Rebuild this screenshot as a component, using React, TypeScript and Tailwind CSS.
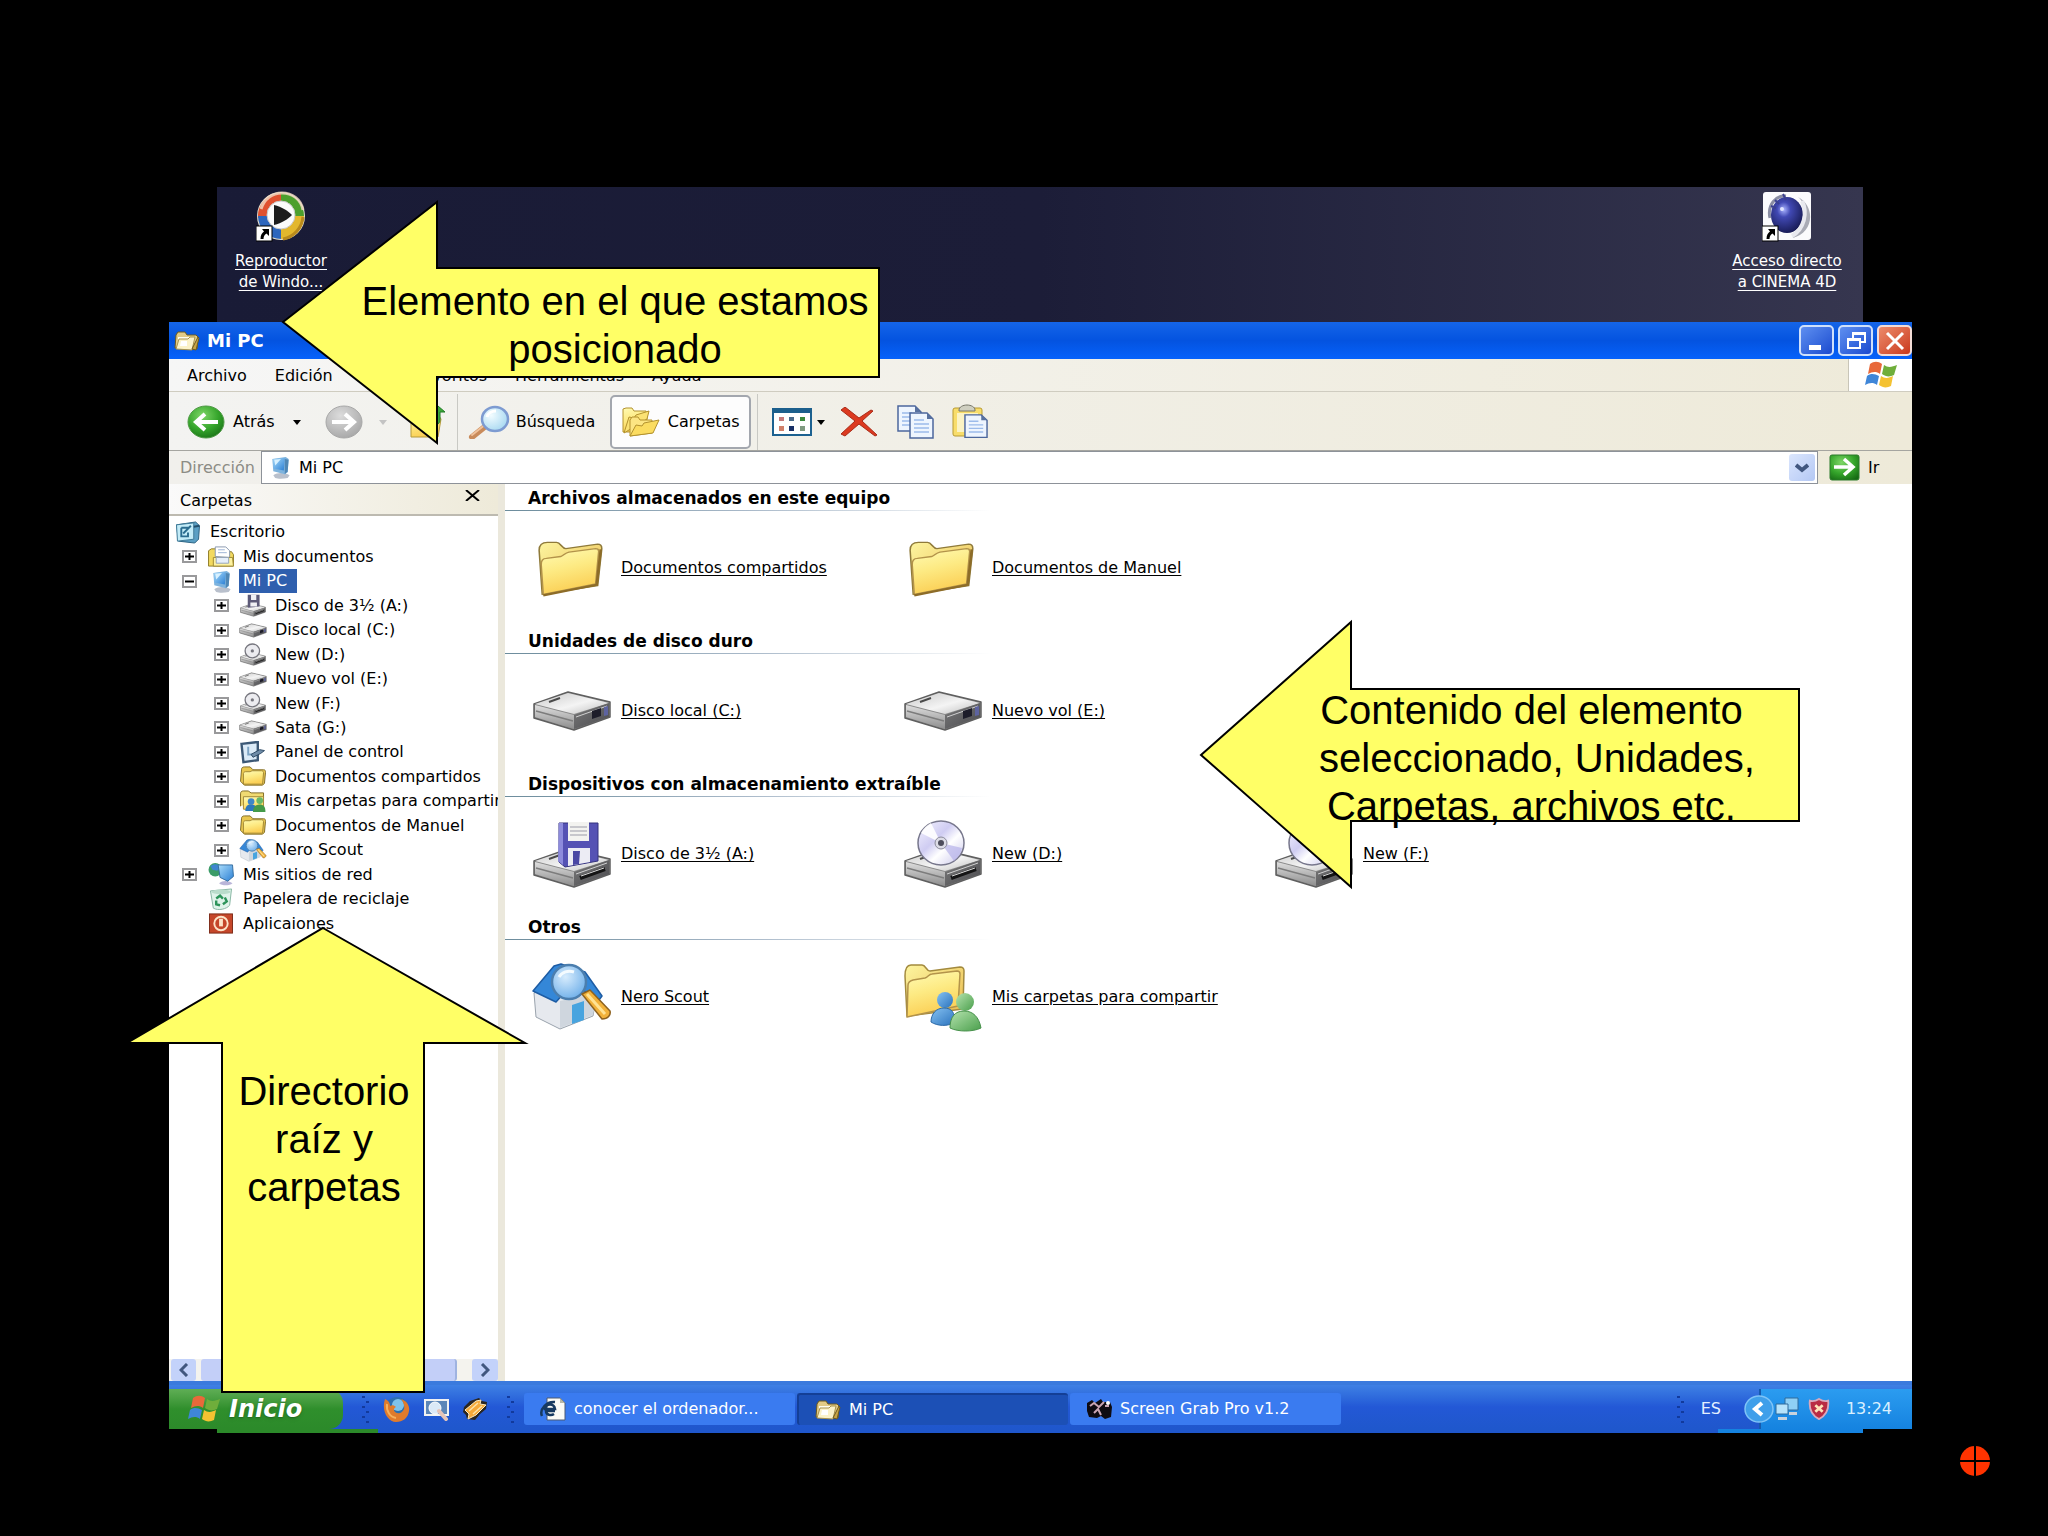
import type { ReactNode } from "react";

/* ---------- shared gradients ---------- */

function Gradients() {
  return (
    <svg width="0" height="0" className="absolute" aria-hidden="true">
      <defs>
        <linearGradient id="folder" x1="0" y1="0" x2="0.3" y2="1">
          <stop offset="0" stopColor="#fffbb4" />
          <stop offset="0.5" stopColor="#fdea83" />
          <stop offset="1" stopColor="#fbcf55" />
        </linearGradient>
        <linearGradient id="folderBack" x1="0" y1="0" x2="1" y2="1">
          <stop offset="0" stopColor="#fdf5a0" />
          <stop offset="1" stopColor="#e9b94c" />
        </linearGradient>
        <linearGradient id="driveTop" x1="0" y1="0" x2="1" y2="1">
          <stop offset="0" stopColor="#c9c9c9" />
          <stop offset="0.55" stopColor="#f4f4f4" />
          <stop offset="1" stopColor="#bdbdbd" />
        </linearGradient>
        <linearGradient id="driveLeft" x1="0" y1="0" x2="0" y2="1">
          <stop offset="0" stopColor="#dedede" />
          <stop offset="1" stopColor="#8d8d8d" />
        </linearGradient>
        <linearGradient id="driveRight" x1="0" y1="0" x2="1" y2="1">
          <stop offset="0" stopColor="#7a7a7a" />
          <stop offset="1" stopColor="#4a4a4e" />
        </linearGradient>
        <radialGradient id="green" cx="0.4" cy="0.3" r="0.8">
          <stop offset="0" stopColor="#7fd668" />
          <stop offset="0.55" stopColor="#35a52b" />
          <stop offset="1" stopColor="#166b14" />
        </radialGradient>
        <radialGradient id="grey" cx="0.4" cy="0.3" r="0.8">
          <stop offset="0" stopColor="#dcdcdc" />
          <stop offset="1" stopColor="#a3a3a3" />
        </radialGradient>
        <radialGradient id="lens" cx="0.35" cy="0.35" r="0.8">
          <stop offset="0" stopColor="#f2fcff" />
          <stop offset="1" stopColor="#9ed4ef" />
        </radialGradient>
        <radialGradient id="lensBlue" cx="0.4" cy="0.35" r="0.8">
          <stop offset="0" stopColor="#d7ecfd" />
          <stop offset="1" stopColor="#5fa6e6" />
        </radialGradient>
        <linearGradient id="disc" x1="0" y1="0" x2="1" y2="1">
          <stop offset="0" stopColor="#f7f6ff" />
          <stop offset="0.4" stopColor="#cfccf2" />
          <stop offset="0.6" stopColor="#ffffff" />
          <stop offset="1" stopColor="#c5c2ea" />
        </linearGradient>
        <linearGradient id="screen" x1="0" y1="0" x2="1" y2="1">
          <stop offset="0" stopColor="#a9dcfb" />
          <stop offset="1" stopColor="#2b7fd4" />
        </linearGradient>
        <radialGradient id="sphere" cx="0.4" cy="0.35" r="0.7">
          <stop offset="0" stopColor="#a9b3ff" />
          <stop offset="0.3" stopColor="#4149b4" />
          <stop offset="1" stopColor="#15184f" />
        </radialGradient>
        <linearGradient id="blueMan" x1="0" y1="0" x2="1" y2="1">
          <stop offset="0" stopColor="#86c2f2" />
          <stop offset="1" stopColor="#2a72bd" />
        </linearGradient>
        <linearGradient id="greenMan" x1="0" y1="0" x2="1" y2="1">
          <stop offset="0" stopColor="#b5e3ae" />
          <stop offset="1" stopColor="#4a9f4c" />
        </linearGradient>
      </defs>
    </svg>
  );
}

/* ---------- desktop icons ---------- */

function ShortcutMark() {
  return (
    <g>
      <rect x="0" y="35" width="16" height="15" fill="#fff" stroke="#000" strokeWidth="1" />
      <path d="M6 38h7v7l-2.500-2.500c-2 1-3 3-3 5.500H4.500c0-4 1.500-6 3.500-7.500z" fill="#000" />
    </g>
  );
}

function MediaPlayerIcon() {
  return (
    <svg width="50" height="52" viewBox="0 0 50 52" aria-hidden="true">
      <circle cx="25" cy="25" r="24" fill="#e9e4d2" />
      <path d="M25 25V2A23 23 0 0 0 2 27z" fill="#e0512f" />
      <path d="M25 25V2A23 23 0 0 1 48 25z" fill="#4c9f2d" />
      <path d="M25 25H48A23 23 0 0 1 25 48z" fill="#e3b72c" />
      <path d="M25 25V48A23 23 0 0 1 2 25z" fill="#2d66bd" />
      <path d="M5 18C8 8 16 2 26 2c10 0 19 6 21 17" stroke="#f3dcc6" strokeWidth="3" fill="none" opacity="0.800" />
      <path d="M47 26c-1 11-9 20-20 22" stroke="#b98a1c" strokeWidth="3" fill="none" />
      <circle cx="25" cy="24" r="14" fill="#fbfbfb" stroke="#c9c9c9" />
      <path d="M18 14c8 2 14 6 18 10-4 4-10 8-18 10z" fill="#1c1c1c" />
      <ShortcutMark />
    </svg>
  );
}

function CinemaIcon() {
  return (
    <svg width="50" height="52" viewBox="0 0 50 52" aria-hidden="true">
      <rect x="1" y="1" width="48" height="48" rx="3" fill="#fbfbfd" />
      <path d="M36 6c10 8 12 28-6 41 22-4 24-32 6-41z" fill="#a9abb5" />
      <path d="M8 27C5 14 14 4 24 5" stroke="#8b8ea4" strokeWidth="3" fill="none" />
      <ellipse cx="25" cy="24" rx="16" ry="18" fill="url(#sphere)" />
      <path d="M21 3l3 6M13 9l4 4M9 15l5 2" stroke="#3b4090" strokeWidth="2" />
      <path d="M40 10c6 12 2 28-10 35" stroke="#e8e9ef" strokeWidth="4" fill="none" />
      <circle cx="20" cy="18" r="2" fill="#dfe4ff" />
      <ShortcutMark />
    </svg>
  );
}

/* ---------- large content icons ---------- */

function FolderShape() {
  return (
    <g strokeLinejoin="round">
      <path d="M8 64L5 14c0-6 3-9 8-9h9c4 0 5 7 9 7l31-5c3 0 4 2 4 5l-4 42z" fill="url(#folderBack)" stroke="#8f7a3a" strokeWidth="1.500" />
      <path d="M9 64L7 30c0-5 2-7 5-7l14-2c3-1 4-4 8-5l26-4c2 0 3 1 3 3l-3 37z" fill="url(#folder)" stroke="#b3934a" strokeWidth="1.500" />
      <path d="M9 65l52-12 4-40" stroke="#8d6c28" strokeWidth="2.500" fill="none" />
    </g>
  );
}

function FolderLarge() {
  return (
    <svg viewBox="0 0 74 68" className="h-[60px] w-[76px]" preserveAspectRatio="none" aria-hidden="true">
      <FolderShape />
    </svg>
  );
}

function DriveBase({ slot }: { slot?: boolean }) {
  return (
    <g strokeLinejoin="round">
      <path d="M2 14L36 2l42 10v15L42 40 2 28z" fill="#8a8a8a" stroke="#5f5f5f" strokeWidth="1.500" />
      <path d="M3 14L36 3l41 10L42 24z" fill="url(#driveTop)" />
      <path d="M3 15l39 10v14L3 27z" fill="url(#driveLeft)" />
      <path d="M42 25l35-12v14L42 39z" fill="url(#driveRight)" />
      <path d="M4 21l37 10" stroke="#7c7c7c" strokeWidth="1.500" />
      <path d="M17 12l11-4" stroke="#4a4a4a" strokeWidth="2" />
      <path d="M44 27l31-11" stroke="#d0d0d0" strokeWidth="1" />
      {slot ? (
        <g>
          <path d="M48 31l25-9" stroke="#151515" strokeWidth="4" />
          <path d="M49 29l23-8" stroke="#dedede" strokeWidth="1" />
        </g>
      ) : (
        <g>
          <path d="M60 21l9-3v8l-9 3z" fill="#1d1d2a" />
          <path d="M72 17l4-1v9l-4 1z" fill="#5d63a0" />
        </g>
      )}
    </g>
  );
}

function HardDiskLarge() {
  return (
    <svg width="80" height="42" viewBox="0 0 80 42" aria-hidden="true">
      <DriveBase />
    </svg>
  );
}

function FloppyLarge() {
  return (
    <svg width="80" height="70" viewBox="0 0 80 70" aria-hidden="true">
      <g transform="translate(0 28)">
        <DriveBase slot />
      </g>
      <path d="M27 4h39v38l-33 6-6-5z" fill="#5552b4" stroke="#35337e" />
      <path d="M27 4l-1 38 5 4V4z" fill="#8d8bdc" />
      <path d="M36 3h21v19H36z" fill="#f3f3f0" />
      <path d="M38 8h17M38 12h17M38 16h17" stroke="#b9b9c0" strokeWidth="1.500" />
      <path d="M36 29h22v14l-22 4z" fill="#ececf4" />
      <path d="M41 32h7l-1 13-6 1z" fill="#4a47a4" />
    </svg>
  );
}

function OpticalLarge() {
  return (
    <svg width="80" height="70" viewBox="0 0 80 70" aria-hidden="true">
      <g transform="translate(0 28)">
        <DriveBase slot />
      </g>
      <ellipse cx="38" cy="24" rx="23" ry="22" fill="url(#disc)" stroke="#77778c" strokeWidth="1.500" />
      <path d="M38 24L18 14a23 22 0 0 1 10-10z" fill="#ffffff" opacity="0.900" />
      <path d="M38 24l21 5a23 22 0 0 1-8 13z" fill="#b7b2ea" opacity="0.700" />
      <circle cx="38" cy="24" r="6" fill="#dcdce6" stroke="#8a8a9a" />
      <circle cx="38" cy="24" r="3" fill="#4d4d5c" />
    </svg>
  );
}

function ScoutShape() {
  return (
    <g strokeLinejoin="round">
      <path d="M2 30l2 24 24 12 33-13 4-24-34-14z" fill="#e6e9ee" stroke="#9aa3ad" />
      <path d="M28 38v27l33-13 4-22z" fill="#cfd6de" />
      <path d="M40 42v19l12-4V38z" fill="#48a4df" />
      <path d="M1 28L22 3l7-2 24 8 17 24-3 4-27-16-16 18z" fill="#3487d8" stroke="#1d5ca4" strokeWidth="1.500" />
      <circle cx="37" cy="19" r="17" fill="url(#lensBlue)" stroke="#4b7eae" strokeWidth="2.500" />
      <path d="M27 14c3-5 9-7 15-5" stroke="#f4fbff" strokeWidth="3" fill="none" />
      <path d="M50 31l8-4 20 21c1 4-2 8-8 8z" fill="#f2b23a" stroke="#8d6220" strokeWidth="1.500" />
      <path d="M55 31l18 20" stroke="#ffe292" strokeWidth="3" />
    </g>
  );
}

function ScoutLarge() {
  return (
    <svg width="80" height="68" viewBox="0 0 80 68" aria-hidden="true">
      <ScoutShape />
    </svg>
  );
}

function SharedShape() {
  return (
    <g strokeLinejoin="round">
      <path d="M4 54L2 14C2 7 4 3 8 3h11c4 0 4 6 8 6l30-4c3 0 4 2 4 4l-1 38z" fill="url(#folderBack)" stroke="#a38a3e" strokeWidth="1.500" />
      <path d="M4 55l1-32c0-3 2-4 5-5l12-2c3-1 4-4 7-4l25-3c2 0 3 1 3 3l-2 32z" fill="url(#folder)" stroke="#b3934a" strokeWidth="1.500" />
      <circle cx="42" cy="38" r="8" fill="url(#blueMan)" />
      <path d="M28 60c0-8 5-14 13-14s11 5 11 14c-7 5-18 4-24 0z" fill="url(#blueMan)" stroke="#2c69a8" />
      <circle cx="62" cy="40" r="9" fill="url(#greenMan)" />
      <path d="M47 66c0-11 5-17 14-17s15 6 17 17c-8 4-23 4-31 0z" fill="url(#greenMan)" stroke="#46904a" />
    </g>
  );
}

function SharedLarge() {
  return (
    <svg width="80" height="70" viewBox="0 0 80 70" aria-hidden="true">
      <SharedShape />
    </svg>
  );
}

/* ---------- small tree icons ---------- */

function Small({ box, children }: { box: string; children: ReactNode }) {
  return (
    <svg viewBox={box} className="h-[23px] w-7 shrink-0" preserveAspectRatio="xMidYMid meet" aria-hidden="true">
      {children}
    </svg>
  );
}

const DesktopSmall = () => (
  <Small box="0 0 28 24">
    <path d="M2 4l20-3 4 4-1 14-4 4-17-2z" fill="#5a9fc4" stroke="#29607f" />
    <path d="M2 4l18-2v17L3 21z" fill="#c3ecf8" stroke="#3c7896" />
    <path d="M7 7h8M7 7v9h7v-4M9 13l8-8" stroke="#2b6d90" strokeWidth="2" fill="none" />
    <path d="M20 6l6-1" stroke="#22506d" strokeWidth="2" />
  </Small>
);

const DocumentsSmall = () => (
  <Small box="0 0 28 24">
    <path d="M1 22V6l3-2h7l2 3h12l2 3v12z" fill="#f2d95f" stroke="#8d7a26" />
    <path d="M8 12V2h11l4 4v7z" fill="#fff" stroke="#8896ad" />
    <path d="M11 5h7M11 8h9" stroke="#9db3d4" />
    <path d="M6 22v-9h20l1 9z" fill="#fdf2a0" stroke="#a08a30" />
    <path d="M9 13h13v6H9z" fill="#e6effa" stroke="#93a3bb" />
  </Small>
);

const ComputerSmall = () => (
  <Small box="0 0 28 24">
    <path d="M7 20c4-3 12-3 17 0l-2 3c-5 1-10 1-13 0z" fill="#b9c0cc" />
    <path d="M6 3l14-2 3 2-1 14-3 2-12-3z" fill="#7eb3dd" />
    <path d="M7 3l12-1-1 13-11-2z" fill="url(#screen)" />
    <path d="M8 4l7-1-6 7z" fill="#d8f1ff" />
    <path d="M19 3l4 1-1 12-3 3z" fill="#4f87b5" />
  </Small>
);

const FloppySmall = () => (
  <Small box="0 0 80 70">
    <g transform="translate(0 28)">
      <DriveBase slot />
    </g>
    <path d="M24 2h36v36l-36 4z" fill="#5d5a78" />
    <path d="M34 2h16v16H34zM32 26h20v12H32z" fill="#f0f0f4" />
  </Small>
);

const DiskSmall = () => (
  <Small box="0 0 80 42">
    <DriveBase />
  </Small>
);

const OpticalSmall = () => (
  <Small box="0 0 80 70">
    <g transform="translate(0 28)">
      <DriveBase slot />
    </g>
    <ellipse cx="38" cy="24" rx="22" ry="21" fill="#ececf0" stroke="#77777f" strokeWidth="4" />
    <circle cx="38" cy="24" r="5" fill="#77777f" />
  </Small>
);

const ControlSmall = () => (
  <Small box="0 0 28 24">
    <path d="M2 3l17-2v19L4 22z" fill="#dbeaf7" stroke="#3c5876" strokeWidth="2.500" />
    <path d="M9 6v8h5" stroke="#7ca3c4" strokeWidth="2" fill="none" />
    <path d="M12 14l9-5 5 1-4 3-8 4z" fill="#6f8ca8" stroke="#2e4a66" />
  </Small>
);

const FolderSmall = () => (
  <Small box="0 0 28 24">
    <path d="M1 17L2 5c0-2 1-3 3-3h6l3 3h11c2 0 2 1 2 3l-1 11-2 2H5z" fill="#e9c750" stroke="#7f6a22" />
    <path d="M4 20V9c0-1 1-2 2-2h5l2-1h10c1 0 2 1 2 2l-1 12z" fill="url(#folder)" stroke="#a08634" />
  </Small>
);

const SharedSmall = () => (
  <Small box="0 0 28 24">
    <path d="M1 17V4c0-2 1-3 3-3h5l3 2h13v5" fill="#f0da72" stroke="#7f6a22" />
    <path d="M4 20V7h21v14z" fill="url(#folder)" stroke="#a08634" />
    <circle cx="12" cy="12" r="3.500" fill="#3f86c8" />
    <path d="M6 22c0-5 2-7 6-7s6 2 6 7z" fill="#2c78bd" />
    <circle cx="21" cy="11" r="3.500" fill="#68b868" />
    <path d="M14 23c0-6 3-8 7-8s6 2 6 8z" fill="#449a49" />
  </Small>
);

const ScoutSmall = () => (
  <Small box="0 0 80 68">
    <ScoutShape />
  </Small>
);

const NetworkSmall = () => (
  <Small box="0 0 28 24">
    <path d="M12 21c4-3 9-3 14 0-3 3-11 3-14 0z" fill="#b9b5d8" />
    <circle cx="8" cy="7" r="7" fill="#3c9c68" />
    <path d="M3 3c4-3 9-2 11 1l-4 4-5-1z" fill="#3e86cf" />
    <path d="M11 2h15l1 12-6 5-8-4z" fill="url(#screen)" stroke="#336d9f" />
  </Small>
);

const BinSmall = () => (
  <Small box="0 0 28 24">
    <path d="M3 3l22-2-2 17c-3 4-12 6-17 3z" fill="#dff3ea" stroke="#86b5a2" />
    <ellipse cx="14" cy="4" rx="10" ry="2.500" fill="#b9dccb" />
    <path d="M9 11l4-3 3 3M18 10l2 4-4 3M13 18l-4-1v-4" stroke="#2b9359" strokeWidth="2.500" fill="none" />
  </Small>
);

const AppsSmall = () => (
  <Small box="0 0 28 24">
    <rect x="2" y="2" width="24" height="20" fill="#c5472a" stroke="#7d2b18" />
    <ellipse cx="14" cy="12" rx="7" ry="7" fill="none" stroke="#fde4c8" strokeWidth="2" />
    <path d="M14 7v8" stroke="#fde4c8" strokeWidth="4" />
  </Small>
);

/* ---------- toolbar and window icons ---------- */

function OpenFolder({ className }: { className: string }) {
  return (
    <svg viewBox="0 0 26 22" className={className} aria-hidden="true">
      <path d="M1 18L2 5l2-3h7l2 3h9l2 2-1 12z" fill="#e3cb86" stroke="#6d5a1e" />
      <path d="M4 7h14v11H4z" fill="#fffdf0" />
      <path d="M2 19l3-10h9l2-2h5l-3 13z" fill="#fbf2c8" stroke="#a8924c" />
      <path d="M18 19l6-12 1 1-3 12z" fill="#c9a544" stroke="#6d5a1e" />
      <path d="M7 11h6v5H6z" fill="#ffffff" />
    </svg>
  );
}

function Flag({ className }: { className: string }) {
  return (
    <svg viewBox="0 0 34 28" className={className} aria-hidden="true">
      <path d="M6 3c4-3 8-3 12 0l-2 10c-4-3-8-2-12 0z" fill="#e8693a" />
      <path d="M20 4c4 3 8 2 13 0l-3 10c-4 2-8 2-12-1z" fill="#6fae3b" />
      <path d="M3 15c4-3 8-2 12 0l-2 9c-4-3-8-2-12 0z" fill="#3f86d8" />
      <path d="M17 15c4 3 8 2 12 0l-2 10c-4 2-8 2-12-1z" fill="#f4c232" />
    </svg>
  );
}

function RoundArrow({ fill, flip }: { fill: string; flip?: boolean }) {
  return (
    <svg width="38" height="34" viewBox="0 0 38 34" aria-hidden="true">
      <ellipse cx="19" cy="17" rx="18" ry="16" fill={fill} stroke={flip ? "#a8a8a8" : "#4f9a45"} />
      <path
        d={flip ? "M7 17h21M20 9l9 8-9 8" : "M31 17H10M18 9l-9 8 9 8"}
        stroke="#fff"
        strokeWidth="4"
        fill="none"
      />
    </svg>
  );
}

function Caret({ className }: { className: string }) {
  return (
    <svg width="8" height="5" viewBox="0 0 8 5" className={className} aria-hidden="true">
      <path d="M0 0h8L4 5z" fill="currentColor" />
    </svg>
  );
}

const UpIcon = () => (
  <svg width="36" height="34" viewBox="0 0 36 34" aria-hidden="true">
    <path d="M2 32V10l3-3h8l3 4h14l2 3-3 18z" fill="url(#folder)" stroke="#b49a3c" />
    <path d="M26 12V7h-5l8-6 7 6h-5v7c0 4-2 6-6 7 2-3 1-6 1-9z" fill="#3da93a" stroke="#1e7a25" />
  </svg>
);

const SearchIcon = () => (
  <svg width="42" height="34" viewBox="0 0 42 34" aria-hidden="true">
    <path d="M19 20L4 32" stroke="#c98b5b" strokeWidth="6" strokeLinecap="round" />
    <path d="M18 19L4 30" stroke="#f0c29c" strokeWidth="2" strokeLinecap="round" />
    <ellipse cx="27" cy="14" rx="13" ry="12" fill="url(#lens)" stroke="#7d9bd1" strokeWidth="2.500" />
    <path d="M19 12c1-4 5-6 9-6" stroke="#fff" strokeWidth="3" fill="none" />
  </svg>
);

const FoldersIcon = () => (
  <svg width="38" height="30" viewBox="0 0 38 30" aria-hidden="true">
    <path d="M1 25V2l3-1h6l2 3h12l1 4v17z" fill="url(#folder)" stroke="#b3922e" />
    <path d="M2 26l5-16 5 1 2-3 13-4-2 8z" fill="#fbe274" stroke="#b3922e" />
    <path d="M8 29V13l2-3h6l2 3h12v13z" fill="#fce583" stroke="#b3922e" />
    <path d="M8 29l6-11 6 1 2-3 15-3-6 13z" fill="#fbdc60" stroke="#b3922e" />
  </svg>
);

const ViewsIcon = () => (
  <svg width="40" height="28" viewBox="0 0 40 28" aria-hidden="true">
    <rect x="1" y="1" width="38" height="26" fill="#fff" stroke="#1c6190" strokeWidth="2" />
    <path d="M0 0h40v5H0z" fill="#1c5f8c" />
    <path d="M7 9h5v4H7z" fill="#c47a7a" />
    <path d="M17 9h5v4h-5z" fill="#4a6a8a" />
    <path d="M28 9h5v4h-5z" fill="#3d8a3d" />
    <path d="M7 18h5v5H7z" fill="#d0806a" />
    <path d="M17 18h5v5h-5z" fill="#182f66" />
    <path d="M28 18h5v5h-5z" fill="#7f9a80" />
  </svg>
);

const DeleteIcon = () => (
  <svg width="38" height="30" viewBox="0 0 38 30" aria-hidden="true">
    <path d="M1 3l4-3 14 11L31 3l2 1-11 10 15 14-2 1-16-12L5 29l-4-2 14-13z" fill="#dc3a20" stroke="#a92b18" />
  </svg>
);

const Sheet = () => (
  <g>
    <path d="M1 1h17l6 6v19H1z" fill="#eef5fe" stroke="#4c679d" strokeWidth="1.500" />
    <path d="M18 1v6h6z" fill="#58719f" />
    <path d="M5 8h10M5 12h15M5 16h15M5 20h15" stroke="#9cbbea" strokeWidth="1.500" />
  </g>
);

const CopyIcon = () => (
  <svg width="38" height="34" viewBox="0 0 38 34" aria-hidden="true">
    <Sheet />
    <g transform="translate(12 7)">
      <Sheet />
    </g>
  </svg>
);

const PasteIcon = () => (
  <svg width="37" height="36" viewBox="0 0 37 36" aria-hidden="true">
    <rect x="1" y="4" width="29" height="28" rx="2" fill="#f8dd6b" stroke="#b79a32" />
    <path d="M5 9h21v19H5z" fill="#fbf3c4" />
    <path d="M7 6c0-3 4-5 8-5s8 2 8 5v1H7z" fill="#cfcfc0" stroke="#77776a" />
    <g transform="translate(12 10) scale(0.960 0.900)">
      <Sheet />
    </g>
  </svg>
);

/* ---------- data ---------- */

type Node = { label: string; level: 0 | 1 | 2; mark?: "+" | "-"; icon: ReactNode; selected?: boolean };

const tree: Node[] = [
  { label: "Escritorio", level: 0, icon: <DesktopSmall /> },
  { label: "Mis documentos", level: 1, mark: "+", icon: <DocumentsSmall /> },
  { label: "Mi PC", level: 1, mark: "-", icon: <ComputerSmall />, selected: true },
  { label: "Disco de 3½ (A:)", level: 2, mark: "+", icon: <FloppySmall /> },
  { label: "Disco local (C:)", level: 2, mark: "+", icon: <DiskSmall /> },
  { label: "New (D:)", level: 2, mark: "+", icon: <OpticalSmall /> },
  { label: "Nuevo vol (E:)", level: 2, mark: "+", icon: <DiskSmall /> },
  { label: "New (F:)", level: 2, mark: "+", icon: <OpticalSmall /> },
  { label: "Sata (G:)", level: 2, mark: "+", icon: <DiskSmall /> },
  { label: "Panel de control", level: 2, mark: "+", icon: <ControlSmall /> },
  { label: "Documentos compartidos", level: 2, mark: "+", icon: <FolderSmall /> },
  { label: "Mis carpetas para compartir", level: 2, mark: "+", icon: <SharedSmall /> },
  { label: "Documentos de Manuel", level: 2, mark: "+", icon: <FolderSmall /> },
  { label: "Nero Scout", level: 2, mark: "+", icon: <ScoutSmall /> },
  { label: "Mis sitios de red", level: 1, mark: "+", icon: <NetworkSmall /> },
  { label: "Papelera de reciclaje", level: 1, icon: <BinSmall /> },
  { label: "Aplicaiones", level: 1, icon: <AppsSmall /> },
];

const indent = { 0: "pl-[5px]", 1: "pl-[13px]", 2: "pl-[45px]" };

const sections = [
  {
    title: "Archivos almacenados en este equipo",
    items: [
      { label: "Documentos compartidos", icon: <FolderLarge /> },
      { label: "Documentos de Manuel", icon: <FolderLarge /> },
    ],
  },
  {
    title: "Unidades de disco duro",
    items: [
      { label: "Disco local (C:)", icon: <HardDiskLarge /> },
      { label: "Nuevo vol (E:)", icon: <HardDiskLarge /> },
    ],
  },
  {
    title: "Dispositivos con almacenamiento extraíble",
    items: [
      { label: "Disco de 3½ (A:)", icon: <FloppyLarge /> },
      { label: "New (D:)", icon: <OpticalLarge /> },
      { label: "New (F:)", icon: <OpticalLarge /> },
    ],
  },
  {
    title: "Otros",
    items: [
      { label: "Nero Scout", icon: <ScoutLarge /> },
      { label: "Mis carpetas para compartir", icon: <SharedLarge /> },
    ],
  },
];

/* ---------- window parts ---------- */

function TitleBar() {
  const button =
    "flex h-[31px] w-[35px] items-center justify-center rounded-[5px] border-2 border-[#cfe0fb] bg-linear-to-br from-[#5f8ff0] to-[#1c49cf]";
  return (
    <header className="flex h-[37px] shrink-0 items-center bg-linear-to-b from-[#1565e8] via-[#0453e0] to-[#0662fb] pl-[5px]">
      <OpenFolder className="h-[22px] w-[26px]" />
      <h1 className="ml-[7px] flex-1 text-lg font-bold text-white">Mi PC</h1>
      <div className="flex gap-1">
        <button className={button} aria-label="Minimizar">
          <svg width="28" height="22" viewBox="0 0 28 22">
            <path d="M6 15h12v5H6z" fill="#fff" />
          </svg>
        </button>
        <button className={button} aria-label="Restaurar">
          <svg width="28" height="22" viewBox="0 0 28 22" fill="none" stroke="#fff" strokeWidth="2">
            <path d="M6 9h12v9H6zM6 10h12M11 8V3h12v9h-4M11 4h12" />
          </svg>
        </button>
        <button
          className="flex h-[31px] w-[35px] items-center justify-center rounded-[5px] border-2 border-[#f3dcd6] bg-linear-to-br from-[#ec8a6a] to-[#c9361a]"
          aria-label="Cerrar"
        >
          <svg width="24" height="20" viewBox="0 0 24 20" stroke="#fff" strokeWidth="3">
            <path d="M4 2l16 16M20 2L4 18" />
          </svg>
        </button>
      </div>
    </header>
  );
}

function MenuBar() {
  return (
    <nav className="flex h-[33px] shrink-0 items-stretch border-b border-[#cfccc0] bg-linear-to-r from-[#f6f6f6] to-[#eeead9] pl-[18px]">
      <div className="flex flex-1 items-center gap-7 pt-[2px]">
        {["Archivo", "Edición", "Ver", "Favoritos", "Herramientas", "Ayuda"].map((item) => (
          <button key={item}>{item}</button>
        ))}
      </div>
      <div className="flex w-16 items-center justify-center border-l border-[#c8c5b8] bg-white">
        <Flag className="h-7 w-[34px]" />
      </div>
    </nav>
  );
}

function ToolBar() {
  return (
    <div className="flex h-[59px] shrink-0 items-center border-b border-[#a5a5a0] bg-linear-to-r from-[#f3f3f1] to-[#eeead9] pt-[2px] pl-[18px]">
      <button className="flex items-center gap-2">
        <RoundArrow fill="url(#green)" />
        Atrás
        <Caret className="ml-[10px] text-black" />
      </button>
      <button className="ml-[24px] flex items-center gap-4" aria-label="Adelante">
        <RoundArrow fill="url(#grey)" flip />
        <Caret className="text-[#c3c3c3]" />
      </button>
      <button className="ml-[22px]" aria-label="Arriba">
        <UpIcon />
      </button>
      <span className="ml-3 h-14 w-px bg-[#c9c9c4]" />
      <button className="ml-[10px] flex items-center gap-[6px]">
        <SearchIcon />
        Búsqueda
      </button>
      <button className="ml-[15px] flex h-[54px] w-[141px] items-center justify-center gap-2 rounded-[5px] border-2 border-[#a3a7ae] bg-[#fdfdfd]">
        <FoldersIcon />
        Carpetas
      </button>
      <span className="ml-[6px] h-14 w-px bg-[#c9c9c4]" />
      <button className="ml-[14px] flex items-center gap-[5px]" aria-label="Vistas">
        <ViewsIcon />
        <Caret className="text-black" />
      </button>
      <button className="ml-[15px]" aria-label="Eliminar">
        <DeleteIcon />
      </button>
      <button className="ml-[19px]" aria-label="Copiar">
        <CopyIcon />
      </button>
      <button className="ml-[17px]" aria-label="Pegar">
        <PasteIcon />
      </button>
    </div>
  );
}

function AddressBar() {
  return (
    <div className="flex h-[33px] shrink-0 items-stretch bg-linear-to-r from-[#f1f0ec] to-[#eeead9]">
      <label htmlFor="address" className="flex w-[92px] items-center pt-px pl-[11px] text-[#8c8c85]">
        Dirección
      </label>
      <div className="flex flex-1 items-center border border-[#8d9299] bg-white pl-1">
        <ComputerSmall />
        <input id="address" defaultValue="Mi PC" className="ml-[5px] min-w-0 flex-1 bg-transparent pt-px outline-none" />
        <button
          className="mr-[2px] flex h-[27px] w-[26px] items-center justify-center rounded-[3px] bg-linear-to-br from-[#dbe6fd] to-[#b4c8f4]"
          aria-label="Desplegar"
        >
          <svg width="14" height="10" viewBox="0 0 14 10" fill="none" stroke="#41577f" strokeWidth="4">
            <path d="M1 2l6 5 6-5" />
          </svg>
        </button>
      </div>
      <button className="ml-[11px] flex w-[83px] items-center gap-2">
        <svg width="31" height="27" viewBox="0 0 31 27" aria-hidden="true">
          <rect x="1" y="1" width="29" height="25" rx="2" fill="url(#green)" stroke="#2a7a2a" />
          <path d="M5 13h17M15 5l9 8-9 8" stroke="#fff" strokeWidth="3.500" fill="none" />
        </svg>
        Ir
      </button>
    </div>
  );
}

function Expander({ mark }: { mark?: "+" | "-" }) {
  if (!mark) return <span className="w-[15px] shrink-0" />;
  return (
    <button
      className="flex h-[13px] w-[15px] shrink-0 items-center justify-center border-2 border-[#99999b] bg-white"
      aria-label={mark === "+" ? "Expandir" : "Contraer"}
    >
      <svg width="9" height="9" viewBox="0 0 9 9" stroke="#000" strokeWidth="2" className="shrink-0">
        <path d={mark === "+" ? "M0 4.500h9M4.500 1v7" : "M0 4.500h9"} />
      </svg>
    </button>
  );
}

function FolderPane() {
  return (
    <aside className="flex w-[329px] shrink-0 flex-col">
      <div className="flex h-8 items-end justify-between border-b-2 border-[#bdbab0] bg-linear-to-r from-[#fafafa] to-[#eeead9] pr-[18px] pb-px pl-[11px]">
        <h2>Carpetas</h2>
        <button aria-label="Cerrar panel" className="pb-3">
          <svg width="15" height="11" viewBox="0 0 15 11" stroke="#000" strokeWidth="2">
            <path d="M1 0l13 11M14 0L1 11" />
          </svg>
        </button>
      </div>
      <ul className="mt-1 grid h-[416px] auto-rows-fr overflow-hidden">
        {tree.map((node) => (
          <li key={node.label} className={`flex items-center whitespace-nowrap ${indent[node.level]}`}>
            {node.level > 0 && (
              <span className="mr-[10px] flex">
                <Expander mark={node.mark} />
              </span>
            )}
            {node.icon}
            <a
              href="#"
              className={
                node.selected
                  ? "ml-1 bg-[#2f5fae] pr-[10px] pl-1 leading-6 text-white"
                  : "ml-1 px-1 leading-6"
              }
            >
              {node.label}
            </a>
          </li>
        ))}
      </ul>
      <div className="mt-auto flex h-[22px] items-stretch bg-[#f4f3ee]" aria-hidden="true">
        <span className="ml-[2px] flex w-[25px] items-center justify-center rounded-[3px] bg-[#c3d2fa]">
          <svg width="10" height="14" viewBox="0 0 10 14" fill="none" stroke="#41577f" strokeWidth="3">
            <path d="M8 1L2 7l6 6" />
          </svg>
        </span>
        <span className="ml-[5px] w-[256px] rounded-[3px] border-r-2 border-[#9fb3e0] bg-[#c3cff8]" />
        <span className="ml-auto flex w-[26px] items-center justify-center rounded-[3px] bg-[#c3d2fa]">
          <svg width="10" height="14" viewBox="0 0 10 14" fill="none" stroke="#41577f" strokeWidth="3">
            <path d="M2 1l6 6-6 6" />
          </svg>
        </span>
      </div>
    </aside>
  );
}

function Contents() {
  return (
    <div className="min-w-0 flex-1">
      {sections.map((section) => (
        <section key={section.title}>
          <h2 className="flex h-[26px] items-center pt-1 pl-[23px] text-[17px] font-bold">{section.title}</h2>
          <div className="h-px w-[486px] bg-linear-to-r from-[#6c8c9c] via-[#a9b9c9] to-white" />
          <ul className="flex h-[116px] items-center pb-[2px] pl-[26px]">
            {section.items.map((item) => (
              <li key={item.label} className="w-[371px] shrink-0">
                <a href="#" className="flex items-center gap-2 whitespace-nowrap underline underline-offset-2">
                  <span className="flex w-[82px] justify-center">{item.icon}</span>
                  {item.label}
                </a>
              </li>
            ))}
          </ul>
        </section>
      ))}
    </div>
  );
}

/* ---------- taskbar ---------- */

function Grip() {
  return (
    <svg width="9" height="32" viewBox="0 0 9 32" fill="#123a9c" aria-hidden="true">
      <path d="M1 3h3v2H1zM5 8h3v2H5zM1 13h3v2H1zM5 18h3v2H5zM1 23h3v2H1zM5 28h3v2H5z" />
    </svg>
  );
}

function Taskbar() {
  const task = "flex h-8 w-[271px] items-center gap-2 rounded-[3px] pl-4 text-white";
  return (
    <footer className="flex h-12 shrink-0 items-end border-t-4 border-[#3b7add] bg-linear-to-b from-[#3f80e4] via-[#2358d6] to-[#1f57cc]">
      <button className="flex h-10 w-[174px] items-center rounded-r-[14px] bg-linear-to-b from-[#5fae55] via-[#2f8f2c] to-[#2c8a2a] pl-[18px] text-2xl font-bold text-white italic">
        <Flag className="h-7 w-[34px]" />
        <span className="ml-2 text-shadow-md">Inicio</span>
      </button>
      <div className="flex h-10 flex-1 items-center">
        <span className="ml-[18px]">
          <Grip />
        </span>
        <button className="ml-[13px]" aria-label="Firefox">
          <svg width="28" height="26" viewBox="0 0 28 26">
            <circle cx="14" cy="13" r="12" fill="#2c6fb0" />
            <circle cx="15" cy="9" r="6" fill="#7ec3ea" />
            <path d="M2 3c4 2 5 4 5 7 2-1 4-1 6 1-2 1-3 3-1 5 4 3 8 0 9-3 1-4-1-7-3-10 6 2 9 7 8 12-1 7-6 11-13 11C5 26-2 15 2 3z" fill="#e07b2c" />
            <path d="M4 8c-1 7 3 13 9 14" stroke="#f7b05c" strokeWidth="2" fill="none" />
          </svg>
        </button>
        <button className="ml-[13px]" aria-label="Buscar">
          <svg width="26" height="24" viewBox="0 0 26 24">
            <rect x="1" y="3" width="23" height="15" fill="#5c86b8" stroke="#f2f2f2" strokeWidth="2" />
            <circle cx="11" cy="11" r="6" fill="#dbe9f7" stroke="#fff" />
            <path d="M15 14l7 8" stroke="#e6c4b8" strokeWidth="4" strokeLinecap="round" />
          </svg>
        </button>
        <button className="ml-3" aria-label="Winamp">
          <svg width="26" height="24" viewBox="0 0 26 24">
            <path d="M8 4l9-3 3 3 5 1-1 7-6 5-5 6-8-1-1-4-3-3 1-5z" fill="#2b2620" />
            <path d="M3 13l11-9 5-1-1 4 6 1-10 10-8 4 1-5z" fill="#f5a93a" stroke="#fbe9c0" />
            <path d="M7 14l9-8M11 17l9-8" stroke="#fbe2a8" strokeWidth="1.500" />
          </svg>
        </button>
        <span className="ml-[18px]">
          <Grip />
        </span>
        <div className="ml-[9px] flex gap-[2px]">
          <button className={`${task} bg-[#3a7bf0]`}>
            <svg width="26" height="24" viewBox="0 0 26 24" aria-hidden="true">
              <path d="M7 1h13l5 5v17H7z" fill="#fbfbf6" stroke="#4d5a73" />
              <path d="M20 1v5h5z" fill="#b8b8a8" />
              <path d="M15 14H6c0 4 5 5 8 3M5 12c1-6 9-6 10 0zM2 19C-1 12 7 4 15 5" stroke="#173a60" strokeWidth="2.500" fill="none" />
            </svg>
            conocer el ordenador...
          </button>
          <button className={`${task} border-t-2 border-l-2 border-[#143f96] bg-[#1c50b6]`}>
            <OpenFolder className="h-[22px] w-[26px]" />
            Mi PC
          </button>
          <button className={`${task} bg-[#3a7bf0]`}>
            <svg width="26" height="22" viewBox="0 0 26 22" aria-hidden="true">
              <path d="M1 5l5-3 3 3 6-4 2 3h7l2 5-1 10-6 2-4-3-4 2-8-1-2-6z" fill="#0e0b12" />
              <path d="M4 8l4-3 5 4 5-5M8 15l4-4 3 6M19 8h4" stroke="#c9a5b4" strokeWidth="2" fill="none" />
              <circle cx="22" cy="5" r="2" fill="#fff" />
            </svg>
            Screen Grab Pro v1.2
          </button>
        </div>
        <span className="mr-[16px] ml-auto">
          <Grip />
        </span>
        <span className="mr-[38px] text-[#e4f0ff]">ES</span>
      </div>
      <div className="flex h-10 w-[153px] items-center border-l-2 border-[#155aae] bg-linear-to-b from-[#2b9cf0] to-[#1583e0] pr-5">
        <button className="-ml-[17px]" aria-label="Mostrar iconos ocultos">
          <svg width="30" height="28" viewBox="0 0 30 28">
            <ellipse cx="15" cy="14" rx="14" ry="13" fill="#3f9fea" stroke="#7fc4f7" strokeWidth="1.500" />
            <path d="M18 8l-7 6 7 6" stroke="#fff" strokeWidth="4" fill="none" />
          </svg>
        </button>
        <svg width="24" height="24" viewBox="0 0 24 24" className="ml-px" role="img" aria-label="Red">
          <path d="M10 1h13v12H10z" fill="#8fd0f5" stroke="#2e6a9c" />
          <path d="M1 7h12v10H1z" fill="#b7e3fb" stroke="#2e6a9c" />
          <path d="M3 20h9v3H3zM14 15h8v3h-8z" fill="#c8d2dc" />
        </svg>
        <svg width="22" height="24" viewBox="0 0 24 24" className="ml-[9px]" role="img" aria-label="Seguridad">
          <path d="M12 1c3 2 6 3 10 2 1 9-2 16-10 20C4 19 1 12 2 3c4 1 7 0 10-2z" fill="#b92c44" stroke="#d9a9bd" strokeWidth="2" />
          <path d="M8 8l8 7M16 8l-8 7" stroke="#ffe3b8" strokeWidth="3" />
        </svg>
        <time className="ml-auto text-[#d9f0ff]">13:24</time>
      </div>
    </footer>
  );
}

/* ---------- annotations ---------- */

function Callout({
  place,
  box,
  points,
  text,
  lines,
}: {
  place: string;
  box: string;
  points: string;
  text: string;
  lines: string[];
}) {
  return (
    <div className={`absolute ${place}`}>
      <svg viewBox={box} className="absolute inset-0 h-full w-full overflow-visible" aria-hidden="true">
        <polygon points={points} fill="#ffff66" stroke="#000" strokeWidth="2" strokeMiterlimit="10" />
      </svg>
      <p
        className={`relative text-center font-['Liberation_Sans',sans-serif] text-[40px] leading-[48px] whitespace-pre text-black ${text}`}
      >
        {lines.join("\n")}
      </p>
    </div>
  );
}

export default function App() {
  return (
    <main className="relative flex min-h-screen flex-col overflow-hidden bg-black pt-[187px] pb-[103px] font-['DejaVu_Sans',Verdana,sans-serif] text-base text-black">
      <Gradients />

      <div className="mr-[185px] ml-[217px] flex h-[135px] shrink-0 justify-between bg-linear-to-r from-[#191b36] via-[#1c1d38] to-[#36364f] px-1 pt-1 pr-4 text-[15px] leading-[21px] text-white">
        <a href="#" className="flex w-[120px] flex-col items-center gap-2 text-center underline underline-offset-3">
          <MediaPlayerIcon />
          <span>
            Reproductor
            <br />
            de Windo...
          </span>
        </a>
        <a href="#" className="flex w-[120px] flex-col items-center gap-2 text-center underline underline-offset-3">
          <CinemaIcon />
          <span>
            Acceso directo
            <br />a CINEMA 4D
          </span>
        </a>
      </div>

      <div className="mr-[136px] ml-[169px] flex flex-1 flex-col bg-white">
        <TitleBar />
        <MenuBar />
        <ToolBar />
        <AddressBar />
        <div className="flex flex-1">
          <FolderPane />
          <div className="w-[7px] shrink-0 bg-[#ebe8dc]" />
          <Contents />
        </div>
        <Taskbar />
      </div>

      <div className="mr-[185px] ml-[217px] flex h-1 shrink-0 bg-[#1f57cc]">
        <span className="w-[161px] bg-[#2c8a2a]" />
        <span className="ml-auto w-[145px] bg-[#1583e0]" />
      </div>

      <Callout
        place="top-[202px] left-[283px] h-[241px] w-[596px]"
        box="0 0 596 241"
        points="0,120 154,0 154,66 596,66 596,175 154,175 154,241"
        text="pt-[75px] pl-[68px]"
        lines={["Elemento en el que estamos", "posicionado"]}
      />
      <Callout
        place="top-[622px] left-[1201px] h-[265px] w-[598px]"
        box="0 0 598 265"
        points="0,133 150,0 150,67 598,67 598,199 150,199 150,265"
        text="pt-[64px] pl-[74px]"
        lines={["Contenido del elemento\u00a0", "seleccionado, Unidades,", "Carpetas, archivos etc.\u00a0"]}
      />
      <Callout
        place="top-[928px] left-[127px] h-[464px] w-[398px]"
        box="0 0 398 464"
        points="196,0 398,115 297,115 297,464 95,464 95,115 0,115"
        text="pt-[139px] pr-[4px]"
        lines={["Directorio", "raíz y", "carpetas"]}
      />

      <svg
        width="30"
        height="30"
        viewBox="0 0 30 30"
        className="absolute right-[58px] bottom-[60px]"
        role="img"
        aria-label="Punto de control"
      >
        <circle cx="15" cy="15" r="15" fill="#ff3300" />
        <path d="M15 0v30M0 15h30" stroke="#000" strokeWidth="2" />
      </svg>
    </main>
  );
}
